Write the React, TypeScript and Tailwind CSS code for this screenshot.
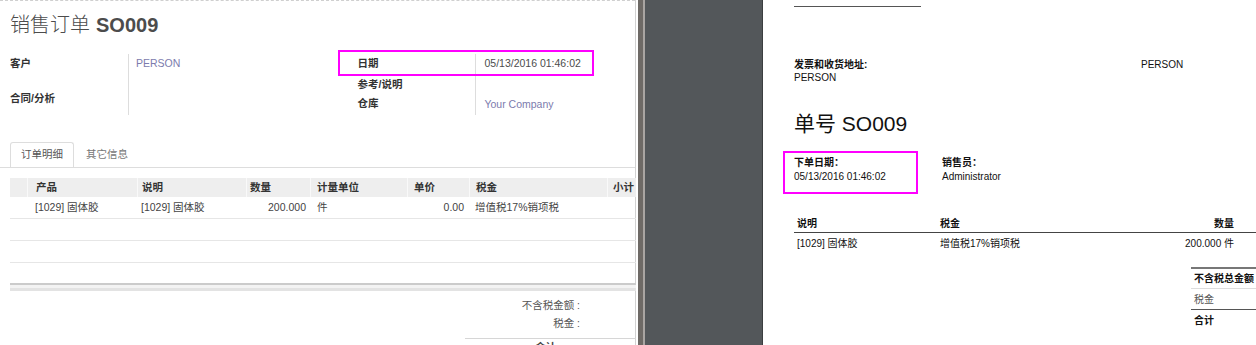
import React from 'react';

const purple = 'text-[#7c7bad]';

const FormRow: React.FC<{ h: string; children?: React.ReactNode }> = ({ h, children }) => (
  <div className={`${h} flex items-center`}>{children}</div>
);

const OrderLines: React.FC = () => {
  const cols = [
    { label: '', w: 'w-[17px]', pad: '' },
    { label: '产品', w: 'w-[110px]', pad: 'pl-[8px]' },
    { label: '说明', w: 'w-[109px]', pad: 'pl-[4px]' },
    { label: '数量', w: 'w-[64px]', pad: 'pl-[3px]' },
    { label: '计量单位', w: 'w-[97px]', pad: 'pl-[6px]' },
    { label: '单价', w: 'w-[62px]', pad: 'pl-[6px]' },
    { label: '税金', w: 'w-[138px]', pad: 'pl-[6px]' },
    { label: '小计', w: 'flex-1', pad: 'pl-[5px]' },
  ];

  return (
    <div className="ml-[10px] w-[626px] mt-[10px]">
      {/* header */}
      <div className="flex h-[19px] bg-[#eeeeee] text-[10.5px] font-bold text-[#333]">
        {cols.map((c, i) => (
          <div
            key={i}
            className={`${c.w} ${c.pad} flex items-center ${i > 0 ? 'border-l border-[#f9f9f9]' : ''}`}
          >
            {c.label}
          </div>
        ))}
      </div>

      {/* data row */}
      <div className="flex h-[22px] items-center border-b border-[#e6e6e6] text-[10.5px] text-[#444]">
        <div className="w-[17px]" />
        <div className="w-[110px] pl-[8px]">[1029] 固体胶</div>
        <div className="w-[109px] pl-[4px]">[1029] 固体胶</div>
        <div className="w-[64px] pr-[4px] text-right">200.000</div>
        <div className="w-[97px] pl-[7px]">件</div>
        <div className="w-[62px] pr-[5px] text-right">0.00</div>
        <div className="w-[138px] pl-[6px]">增值税17%销项税</div>
        <div className="flex-1" />
      </div>
      <div className="h-[22px] border-b border-[#e6e6e6]" />
      <div className="h-[22px] border-b border-[#e6e6e6]" />

      {/* footer */}
      <div className="mt-[20px] h-[2px] bg-[#cbcbcb]" />
      <div className="h-[3px] bg-[#f3f3f3]" />
      <div className="h-[3px] bg-[#e3e3e3]" />

      {/* totals */}
      <div className="mt-[5px] flex flex-col items-end pr-[56px] text-[10.5px] text-[#555]">
        <div className="h-[18px] leading-[18px]">不含税金额 :</div>
        <div className="h-[19px] leading-[19px]">税金 :</div>
      </div>
      <div className="ml-[455px] mt-[5px] border-t border-[#d6d6d6] pt-[1px] text-[10.5px] font-bold text-[#444]">
        <div className="pl-[70px]">合计</div>
      </div>
    </div>
  );
};

const OdooForm: React.FC = () => (
  <div className="w-[638px] shrink-0 h-full overflow-hidden bg-white">
    <div className="w-[636px] h-full border-r border-[#d2d2d2]">
      <div className="h-px border-t border-dashed border-[#cfcfcf]" />

      {/* title */}
      <div className="mt-[10px] h-[28px] pl-[10px] flex items-center text-[20px] text-[#4c4c4c]">
        <span className="font-light">销售订单</span>
        <span className="ml-[6px] font-bold">SO009</span>
      </div>

      {/* form groups */}
      <div className="mt-[15px] flex text-[10.5px]">
        <div className="w-[339px] pl-[10px] flex">
          <div className="w-[119px] border-r border-[#dddddd] font-bold text-[#333]">
            <FormRow h="h-[20px]">客户</FormRow>
            <FormRow h="h-[20px] mt-[15px]">合同/分析</FormRow>
          </div>
          <div className="pl-[7px]">
            <FormRow h="h-[20px]">
              <span className={purple}>PERSON</span>
            </FormRow>
          </div>
        </div>

        <div className="relative w-[297px] flex">
          <div className="w-[138px] pl-[19px] border-r border-[#dddddd] font-bold text-[#333]">
            <FormRow h="h-[20px]">日期</FormRow>
            <FormRow h="h-[21px]">参考/说明</FormRow>
            <FormRow h="h-[18px]">仓库</FormRow>
            <div className="h-[2px]" />
          </div>
          <div className="pl-[8px] text-[#4c4c4c]">
            <FormRow h="h-[20px]">05/13/2016 01:46:02</FormRow>
            <FormRow h="h-[21px]" />
            <FormRow h="h-[20px]">
              <span className={purple}>Your Company</span>
            </FormRow>
          </div>
          <div className="absolute left-0 top-[-4px] w-[256px] h-[26px] border-2 border-[#ff00ff]" />
        </div>
      </div>

      {/* tabs */}
      <div className="mt-[27px] flex pl-[10px] border-b border-[#dddddd] text-[10.5px]">
        <div className="-mb-px h-[25px] px-[10px] flex items-center border border-b-0 border-[#dddddd] rounded-t-[3px] bg-white text-[#555]">
          订单明细
        </div>
        <div className="h-[25px] px-[12px] flex items-center text-[#777]">其它信息</div>
      </div>

      <OrderLines />
    </div>
  </div>
);

const ReportPreview: React.FC = () => (
  <div className="w-[493px] shrink-0 h-full overflow-hidden bg-white text-[#111] text-[10px]">
    <div className="pl-[31px] w-[520px]">
      <div className="mt-[6px] h-px w-[127px] bg-[#555]" />

      {/* addresses */}
      <div className="mt-[51px] flex leading-[13px]">
        <div className="w-[347px]">
          <div className="font-bold">发票和收货地址:</div>
          <div>PERSON</div>
        </div>
        <div>PERSON</div>
      </div>

      <div className="mt-[27px] h-[26px] leading-[26px] text-[21px]">单号 SO009</div>

      {/* info */}
      <div className="relative mt-[19px] flex leading-[14px]">
        <div className="w-[148px]">
          <div className="font-bold">下单日期：</div>
          <div>05/13/2016 01:46:02</div>
        </div>
        <div>
          <div className="font-bold">销售员：</div>
          <div>Administrator</div>
        </div>
        <div className="absolute left-[-11px] top-[-5px] w-[135px] h-[43px] border-2 border-[#ff00ff]" />
      </div>

      {/* lines */}
      <div className="mt-[30px] w-[462px]">
        <div className="flex h-[19px] items-center border-b border-[#444] font-bold">
          <div className="w-[143px] pl-[3px]">说明</div>
          <div className="flex-1 pl-[3px]">税金</div>
          <div className="pr-[22px]">数量</div>
        </div>
        <div className="flex h-[21px] items-center">
          <div className="w-[143px] pl-[3px]">[1029] 固体胶</div>
          <div className="flex-1 pl-[3px]">增值税17%销项税</div>
          <div className="pr-[22px]">200.000 件</div>
        </div>
      </div>

      {/* totals */}
      <div className="mt-[13px] ml-[397px] w-[120px] border-t-2 border-[#777]">
        <div className="h-[20px] flex items-center pl-[3px] font-bold border-b border-[#dddddd]">不含税总金额</div>
        <div className="h-[21px] flex items-center pl-[3px] text-[#555] border-b border-[#555]">税金</div>
        <div className="h-[20px] flex items-center pl-[3px] font-bold">合计</div>
      </div>
    </div>
  </div>
);

export default function App() {
  return (
    <div className="flex w-[1256px] h-[345px] overflow-hidden bg-white font-['Liberation_Sans','Noto_Sans_CJK_SC',sans-serif]">
      <OdooForm />
      <div className="w-[5px] shrink-0 bg-[#6e6a66]" />
      <div className="w-[2px] shrink-0 bg-[#a9a5a2]" />
      <div className="w-[117px] shrink-0 bg-[#53575a]" />
      <div className="w-px shrink-0 bg-[#3b3e40]" />
      <ReportPreview />
    </div>
  );
}
